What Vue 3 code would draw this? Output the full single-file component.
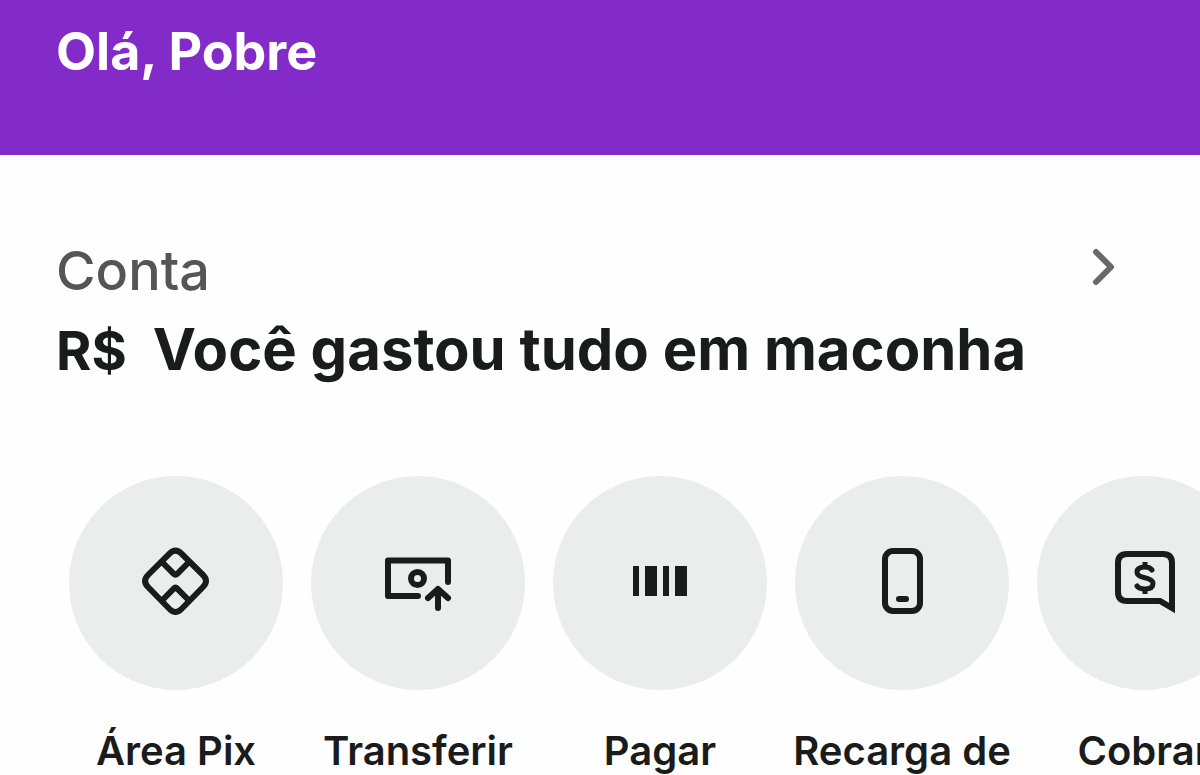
<script setup>
import { computed, ref } from 'vue'

const name = ref('Pobre')
const greeting = computed(() => `Olá, ${name.value}`)

const shortcuts = [
  { id: 'pix', label: 'Área Pix', box: '1 3 100 100' },
  { id: 'transfer', label: 'Transferir', box: '-2 -2 100 100' },
  { id: 'pay', label: 'Pagar', box: '-10 -17 100 100' },
  { id: 'recharge', label: 'Recarga de', box: '-8 3 100 100' },
  { id: 'charge', label: 'Cobrar', box: '-6 3 100 100' },
]
</script>

<template>
  <div class="app">
    <header class="top">
      <h1 class="greeting">{{ greeting }}</h1>
    </header>

    <main>
      <section class="account">
        <a class="account-link" href="#conta">
          <h2 class="account-title">Conta</h2>
          <svg class="chevron" viewBox="0 0 26 40" aria-hidden="true">
            <path d="M6 5 L21 20 L6 35" />
          </svg>
        </a>
        <p class="balance">
          <span class="currency">R$</span>
          <span class="amount">Você gastou tudo em maconha</span>
        </p>
      </section>

      <nav class="shortcuts" aria-label="Atalhos">
        <button v-for="item in shortcuts" :key="item.id" class="shortcut" type="button">
          <span class="disc">
            <svg class="icon" :viewBox="item.box" aria-hidden="true">
              <g v-if="item.id === 'pix'">
                <path d="M44.5 23.6 Q50.5 17.6 56.5 23.6 L78 45 Q84 51 78 57 L56.5 79 Q50.5 85 44.5 79 L23 57 Q17 51 23 45 Z" />
                <path d="M37.5 32.5 L48.5 43.6 Q50.5 45.6 52.5 43.6 L63.5 32.5" />
                <path d="M37.5 70 L48.5 58.8 Q50.5 56.8 52.5 58.8 L63.5 70" />
              </g>
              <g v-else-if="item.id === 'transfer'">
                <path d="M48 61 H18 V25.5 H78 V47" />
                <circle cx="47.5" cy="43.5" r="6.5" />
                <path d="M68 73 V55 M58 63 L68 54 L78 63" />
              </g>
              <g v-else-if="item.id === 'pay'" class="solid">
                <rect x="13" y="16" width="6" height="30" />
                <rect x="25" y="16" width="12" height="30" />
                <rect x="43" y="16" width="6" height="30" />
                <rect x="55" y="16" width="12" height="30" />
              </g>
              <g v-else-if="item.id === 'recharge'">
                <rect x="25" y="21" width="35" height="60" rx="8" />
                <path d="M39 69 H46" />
              </g>
              <g v-else>
                <path class="mitre" d="M72 78 V33 Q72 24 63 24 H27 Q18 24 18 33 V62 Q18 71 27 71 H60 Z" />
                <path class="sign" d="M52 40 Q50 37 45 37 Q37 37 37 42 Q37 46 44 47.5 Q53 49.5 53 53.5 Q53 59 45 59 Q39 59 37 56" />
                <path class="bar" d="M45 32 V38 M45 58 V64" />
              </g>
            </svg>
          </span>
          <span class="label">{{ item.label }}</span>
        </button>
      </nav>
    </main>
  </div>
</template>

<style>
html,
body {
  background: #fefefe;
  overflow: hidden;
}
</style>

<style scoped>
.app {
  font-family: Inter, "Liberation Sans", sans-serif;
  color: #1a1b1b;
}

.top {
  padding: 18px 56px 69px;
  background: #832bc8;
}

.greeting {
  margin: 0;
  font-size: 52px;
  font-weight: 700;
  line-height: 68px;
  color: #fff;
}

.account {
  padding: 80px 56px 0;
}

.account-link {
  display: flex;
  align-items: center;
  justify-content: space-between;
  padding-right: 28px;
  color: #555557;
  text-decoration: none;
}

.account-title {
  margin: 0;
  font-size: 54px;
  font-weight: 500;
  line-height: 72px;
}

.chevron {
  width: 26px;
  height: 40px;
  margin-bottom: 8px;
  fill: none;
  stroke: #69696b;
  stroke-width: 6;
  stroke-linecap: round;
  stroke-linejoin: round;
}

.balance {
  display: flex;
  align-items: baseline;
  gap: 26px;
  margin: 2px 0 0;
  font-weight: 700;
  line-height: 80px;
  white-space: nowrap;
}

.currency {
  font-size: 54px;
}

.amount {
  font-size: 58px;
}

.shortcuts {
  display: flex;
  gap: 28px;
  padding: 85px 0 0 69px;
  overflow: hidden;
}

.shortcut {
  display: flex;
  flex: none;
  flex-direction: column;
  align-items: center;
  gap: 33px;
  width: 214px;
  padding: 0;
  border: 0;
  background: none;
  color: inherit;
  font: inherit;
  cursor: pointer;
}

.disc {
  display: grid;
  place-items: center;
  width: 214px;
  height: 214px;
  border-radius: 50%;
  background: #ebecec;
}

.icon {
  width: 100px;
  height: 100px;
  fill: none;
  stroke: #1a1b1b;
  stroke-width: 6;
  stroke-linecap: round;
  stroke-linejoin: round;
}

.solid {
  fill: #1a1b1b;
  stroke: none;
}

.mitre {
  stroke-linejoin: miter;
}

.sign {
  stroke-width: 5;
}

.bar {
  stroke-width: 5;
  stroke-linecap: butt;
}

.label {
  font-size: 40px;
  font-weight: 600;
  line-height: 56px;
  white-space: nowrap;
}
</style>
